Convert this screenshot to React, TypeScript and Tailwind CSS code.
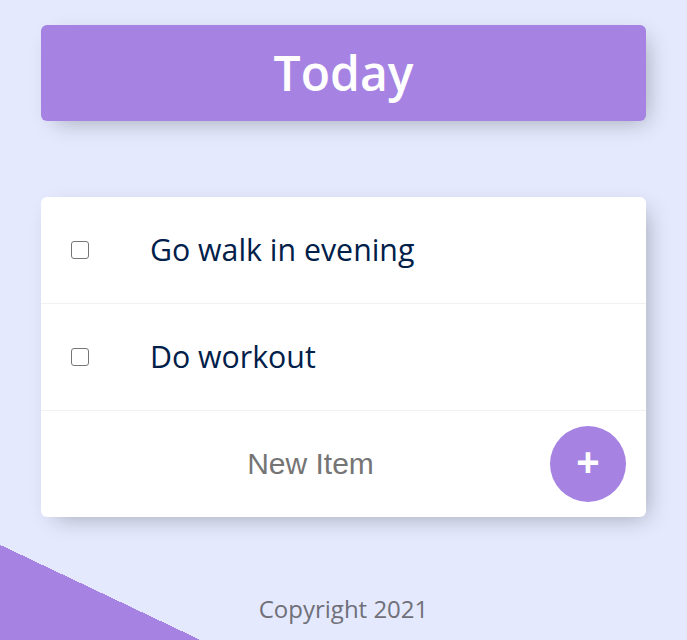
import React from "react";

export default function App() {
  const items = ["Go walk in evening", "Do workout"];
  return (
    <div className="relative h-[640px] w-full overflow-hidden bg-[#E4E9FD] bg-[linear-gradient(25.4deg,#A683E3_86px,#E4E9FD_86px)] font-['Open_Sans',sans-serif]">
      <div className="mx-auto flex w-[605px] flex-col pt-[25px]">
        <div className="flex h-[96px] items-center justify-center rounded-[6px] bg-[#A683E3] shadow-[7px_7px_22px_-7px_rgba(0,0,0,0.3)]">
          <h1 className="text-[48px] font-semibold leading-none text-white">Today</h1>
        </div>

        <div className="mt-[76px] flex flex-col rounded-[6px] bg-white shadow-[7px_7px_22px_-7px_rgba(0,0,0,0.3)]">
          {items.map((t) => (
            <div key={t} className="flex h-[107px] items-center border-b border-[#F1F1F1]">
              <span className="ml-[30px] block h-[18px] w-[18px] shrink-0 rounded-[3px] border-[1.5px] border-[#767676] bg-white" />
              <p className="ml-[61px] text-[30.3px] leading-none text-[#00204a]">{t}</p>
            </div>
          ))}
          <div className="flex h-[106px] items-center">
            <div className="ml-[30px] flex-1 text-center font-['Liberation_Sans',Arial,sans-serif] text-[30px] leading-none text-[#757575]">
              New Item
            </div>
            <button className="mr-[20px] flex h-[76px] w-[76px] items-center justify-center rounded-full bg-[#A683E3] pb-[4px] font-['Liberation_Sans',Arial,sans-serif] text-[40px] font-bold leading-none text-white">
              +
            </button>
          </div>
        </div>

        <footer className="mt-[80px] text-center text-[24px] leading-none text-[#707078]">
          Copyright 2021
        </footer>
      </div>
    </div>
  );
}
